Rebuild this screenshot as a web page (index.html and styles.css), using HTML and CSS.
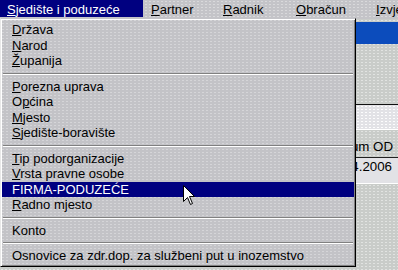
FILE: index.html
```html
<!DOCTYPE html>
<html>
<head>
<meta charset="utf-8">
<link rel="stylesheet" href="styles.css">
</head>
<body>
<div class="screen">
  <div class="menubar">
    <span class="mi mi-1 active"><u>S</u>jedište i poduzeće</span>
    <span class="mi mi-2"><u>P</u>artner</span>
    <span class="mi mi-3"><u>R</u>adnik</span>
    <span class="mi mi-4"><u>O</u>bračun</span>
    <span class="mi mi-5"><u>I</u>zvještaji</span>
  </div>
  <div class="client">
    <div class="titlebar"></div>
    <div class="field"></div>
    <div class="thead">Datum OD</div>
    <div class="tval">01.04.2006</div>
  </div>
  <div class="dropdown">
    <div class="item"><u>D</u>ržava</div>
    <div class="item"><u>N</u>arod</div>
    <div class="item"><u>Ž</u>upanija</div>
    <div class="sep"></div>
    <div class="item"><u>P</u>orezna uprava</div>
    <div class="item">O<u>p</u>ćina</div>
    <div class="item"><u>M</u>jesto</div>
    <div class="item"><u>S</u>jedište-boravište</div>
    <div class="sep"></div>
    <div class="item"><u>T</u>ip podorganizacije</div>
    <div class="item"><u>V</u>rsta pravne osobe</div>
    <div class="item selected">FIRMA-PODUZEĆE</div>
    <div class="item"><u>R</u>adno mjesto</div>
    <div class="sep"></div>
    <div class="item">Konto</div>
    <div class="sep"></div>
    <div class="item">Osnovice za zdr.dop. za službeni put u inozemstvo</div>
  </div>
  <svg class="cursor" width="13" height="21" viewBox="0 0 13 21">
    <path d="M0.5 0.5 L0.5 16.5 L4.5 12.5 L7.5 19.5 L9.5 18.5 L6.5 11.5 L11.5 11.5 Z" fill="#fff" stroke="#000" stroke-width="1"/>
  </svg>
</div>
</body>
</html>
```

FILE: styles.css
```css
html, body {
  margin: 0;
  padding: 0;
}
body {
  width: 398px;
  height: 270px;
  overflow: hidden;
  font-family: "Liberation Sans", Arial, sans-serif;
  font-size: 13px;
  color: #000;
}
.screen {
  position: relative;
  width: 398px;
  height: 270px;
  overflow: hidden;
  background: #c4c4c8;
}
.menubar {
  display: flex;
  height: 19px;
  white-space: nowrap;
  overflow: hidden;
  background-color: #c4c4c8;
  background-image: radial-gradient(circle, rgba(255,255,255,0.35) 0.6px, transparent 0.9px);
  background-size: 4px 3px;
}
.mi {
  flex: none;
  box-sizing: border-box;
  height: 17px;
  padding: 2px 0 0 8px;
  line-height: 15px;
}
.mi-1 { width: 143px; padding-left: 7px; }
.mi-2 { width: 72px; }
.mi-3 { width: 73px; }
.mi-4 { width: 80px; }
.mi-5 { width: 60px; }
.mi.active {
  background: #000080;
  color: #fff;
}
.client {
  display: flex;
  flex-direction: column;
  height: 251px;
  background-color: #c9ccc9;
  background-image: radial-gradient(circle, rgba(255,255,255,0.45) 0.6px, transparent 0.9px);
  background-size: 4px 3px;
}
.titlebar {
  margin-top: 3px;
  height: 22px;
  background: #0c4cbc;
}
.field {
  margin-top: 60px;
  height: 24px;
  border-top: 1px solid #101010;
  border-bottom: 1px solid #fff;
  background-color: #e2e2e6;
  background-image: radial-gradient(circle, rgba(255,255,255,0.9) 0.6px, transparent 0.9px);
  background-size: 4px 3px;
}
.thead {
  box-sizing: border-box;
  height: 28px;
  padding: 9px 5px 0 0;
  text-align: right;
  font-size: 13.3px;
  line-height: 15px;
  border-bottom: 1px solid #202020;
}
.tval {
  box-sizing: border-box;
  height: 26px;
  padding: 1px 6px 0 0;
  text-align: right;
  font-size: 13.3px;
  line-height: 15px;
  background: #e2e2e6;
  border-bottom: 1px solid #fff;
}
.dropdown {
  position: absolute;
  left: 0;
  top: 18px;
  width: 356px;
  box-sizing: border-box;
  padding: 3px 0 2px;
  border-top: 1px solid #c4c4c8;
  border-left: 1px solid #e8e8e8;
  border-right: 1px solid #000;
  border-bottom: 1px solid #000;
  box-shadow: inset 1px 1px 0 #fff, inset -1px -1px 0 #808080;
  background-color: #c3c3c7;
  background-image: radial-gradient(circle, rgba(255,255,255,0.3) 0.6px, transparent 0.9px);
  background-size: 4px 3px;
}
.item {
  height: 15.5px;
  line-height: 16px;
  padding-left: 10px;
  margin: 0 1px;
  white-space: nowrap;
}
.item.selected {
  background: #000080;
  color: #fff;
}
.sep {
  height: 0;
  margin: 4px 2px;
  border-top: 1px solid #808080;
  border-bottom: 1px solid #fff;
}
.cursor {
  position: absolute;
  left: 183px;
  top: 185px;
}
```
